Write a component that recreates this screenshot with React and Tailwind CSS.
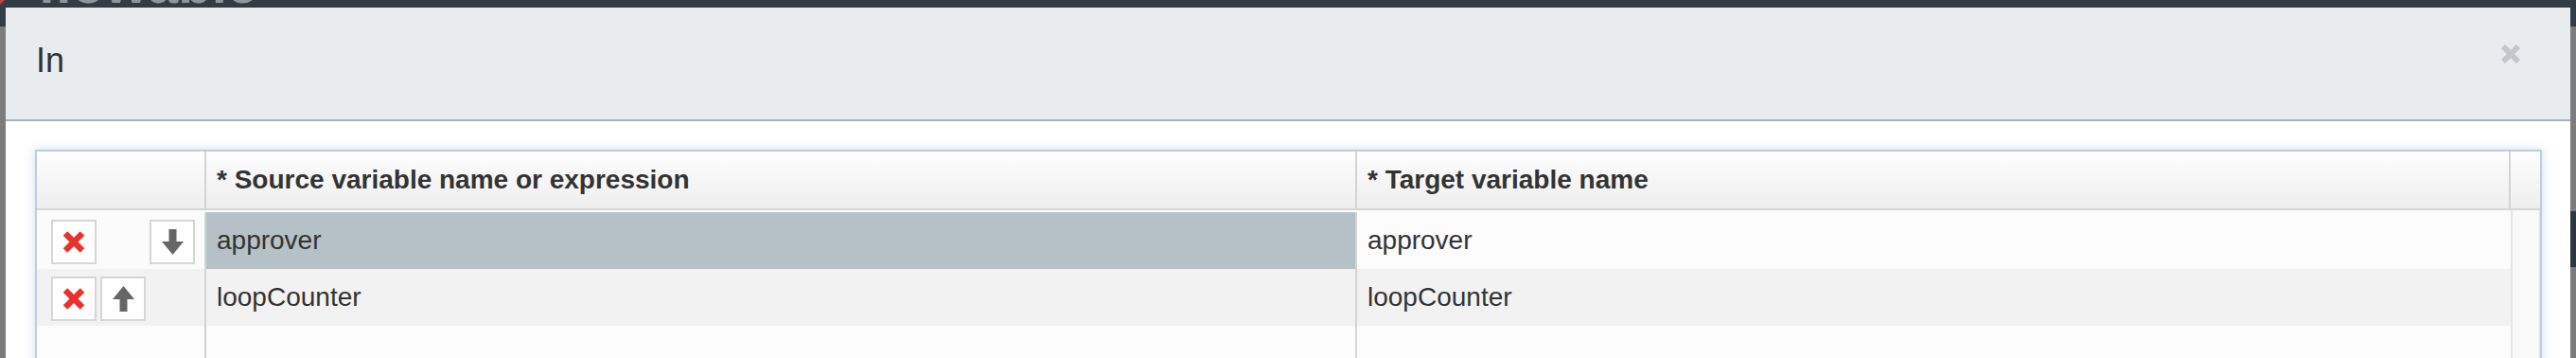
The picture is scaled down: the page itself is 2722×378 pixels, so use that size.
import React from "react";

const rows = [
  { source: "approver", target: "approver", up: false, down: true, selected: true },
  { source: "loopCounter", target: "loopCounter", up: true, down: false, selected: false },
];

function RemoveIcon() {
  return (
    <svg width="24" height="23" viewBox="0 0 24 23">
      <path d="M3 2.5 L21 20.5 M21 2.5 L3 20.5" stroke="#e9332a" strokeWidth="6.5" />
    </svg>
  );
}

function ArrowIcon({ dir }) {
  return (
    <svg width="23" height="27" viewBox="0 0 23 27" className={dir === "up" ? "rotate-180" : ""}>
      <rect x="7.5" y="0" width="8" height="14" fill="#666666" />
      <polygon points="0,13 23,13 11.5,27" fill="#666666" />
    </svg>
  );
}

function IconButton({ children, hidden }) {
  return (
    <div
      className={`flex h-[47px] w-[48px] items-center justify-center border-2 border-[#d6d6d6] bg-white ${
        hidden ? "invisible" : ""
      }`}
    >
      {children}
    </div>
  );
}

export default function App() {
  return (
    <div className="relative h-[378px] w-[2722px] overflow-hidden bg-[#7c7c7c] font-['Liberation_Sans',Arial,sans-serif]">
      {/* page behind the overlay */}
      <div className="flex h-[28px] items-start overflow-hidden bg-[#333b45]">
        <div className="-ml-[34px] -mt-[36px] h-[44px] w-[44px] shrink-0 rounded-full bg-[#b94a36]" />
        <span className="-mt-[46px] ml-[30px] text-[58px] font-bold leading-none text-[#8f959c]">flowable</span>
      </div>
      <div className="ml-auto mt-[195px] h-[59px] w-[6px] bg-[#2e3640]" />

      {/* modal */}
      <div className="absolute left-[6px] top-[8px] w-[2710px] bg-white">
        <div className="flex h-[120px] items-center justify-between border-b-2 border-[#a8afb8] bg-[#e8ecef] pb-[7px] pl-[32px] pr-[52px]">
          <h4 className="text-[36px] leading-none text-[#333333]">In</h4>
          <svg width="22" height="20" viewBox="0 0 22 20" className="mb-[13px]">
            <path d="M3 2 L19 18 M19 2 L3 18" stroke="#c3c7cb" strokeWidth="6" />
          </svg>
        </div>

        <div className="pl-[31px] pr-[30px] pt-[30px]">
          <div className="w-full border-2 border-[#bfcddb] shadow-[0_0_10px_rgba(120,160,220,0.35)]">
            {/* header */}
            <div className="flex h-[62px] border-b-2 border-[#d6d6d6] bg-linear-to-b from-[#fefefe] to-[#eeeeee] text-[28px] font-bold text-[#333333]">
              <div className="w-[179px] border-r-2 border-[#d4d4d4]" />
              <div className="flex w-[1216px] items-center border-r-2 border-[#d4d4d4] pl-[11px]">
                * Source variable name or expression
              </div>
              <div className="flex w-[1219px] items-center border-r-2 border-[#d4d4d4] pl-[11px]">
                * Target variable name
              </div>
              <div className="flex-1" />
            </div>

            {/* body */}
            <div className="flex h-[200px] bg-[#fcfcfc] pt-[2px] text-[28px] text-[#333333]">
              <div className="flex w-[2614px] flex-col">
                {rows.map((r) => (
                  <div
                    key={r.source}
                    className={`flex h-[60px] ${r.selected ? "bg-[#fbfbfb]" : "bg-[#f2f2f2]"}`}
                  >
                    <div className="flex w-[179px] items-center gap-[4px] border-r-2 border-[#d4d4d4] pl-[15px] pt-[3px]">
                      <IconButton>
                        <RemoveIcon />
                      </IconButton>
                      <IconButton hidden={!r.up}>
                        <ArrowIcon dir="up" />
                      </IconButton>
                      <IconButton hidden={!r.down}>
                        <ArrowIcon dir="down" />
                      </IconButton>
                    </div>
                    <div
                      className={`flex w-[1216px] items-center border-r-2 border-[#d4d4d4] pl-[11px] ${
                        r.selected ? "bg-[#b5c1c6]" : ""
                      }`}
                    >
                      {r.source}
                    </div>
                    <div className={`flex w-[1219px] items-center pl-[11px] ${r.selected ? "bg-[#fcfcfc]" : ""}`}>
                      {r.target}
                    </div>
                  </div>
                ))}
                <div className="flex flex-1">
                  <div className="w-[179px] border-r-2 border-[#d4d4d4]" />
                  <div className="w-[1216px] border-r-2 border-[#d4d4d4]" />
                  <div className="w-[1219px]" />
                </div>
              </div>
              <div className="-mt-[2px] w-[31px] border-l-2 border-r border-[#e4e4e4] bg-[#f9f9f9]" />
            </div>
          </div>
        </div>
      </div>
    </div>
  );
}
